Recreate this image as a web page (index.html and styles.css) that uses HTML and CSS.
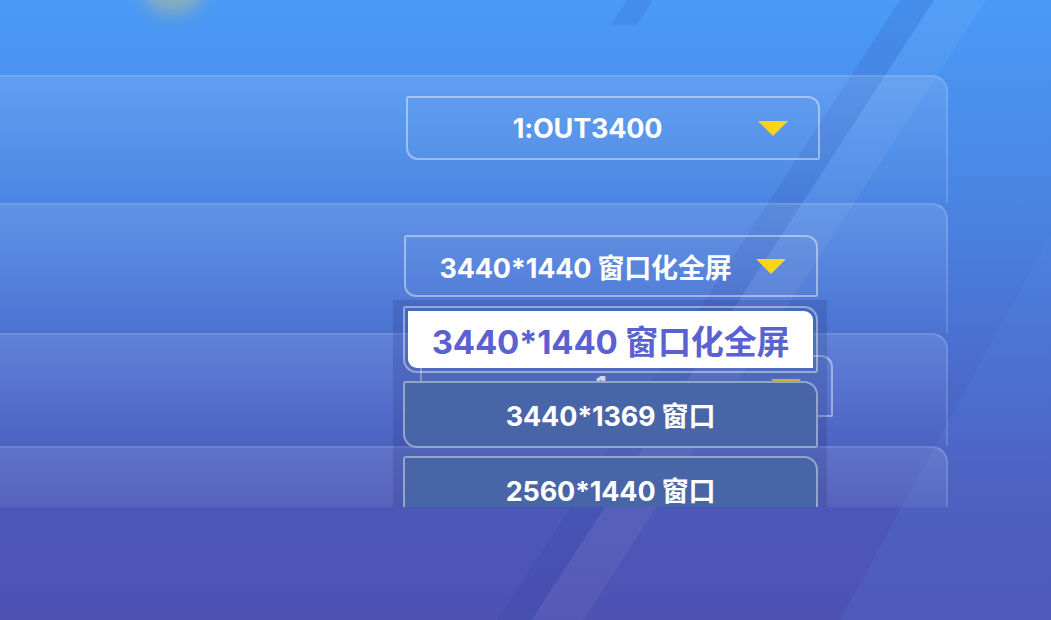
FILE: index.html
```html
<!DOCTYPE html>
<html lang="zh-CN">
<head>
    <meta charset="UTF-8">
    <meta name="viewport" content="width=device-width, initial-scale=1.0">
    <title>显示设置</title>
    <link rel="stylesheet" href="styles.css">
</head>
<body>
    <div class="screen">
        <div class="deco">
            <span class="glow"></span>
            <span class="band band-tip"></span>
            <span class="band band-dark"></span>
            <span class="band band-light"></span>
            <span class="band band-wide"></span>
        </div>

        <div class="list">
            <div class="row row-1">
                <div class="select">
                    <span class="value">1:OUT3400</span>
                    <i class="arrow"></i>
                </div>
            </div>
            <div class="row row-2">
                <div class="select">
                    <span class="value">3440*1440 窗口化全屏</span>
                    <i class="arrow"></i>
                </div>
            </div>
            <div class="row row-3">
                <div class="select">
                    <span class="value">1</span>
                    <i class="arrow"></i>
                </div>
            </div>
            <div class="row row-4"></div>

            <ul class="dropdown">
                <li class="option active">3440*1440 窗口化全屏</li>
                <li class="option">3440*1369 窗口</li>
                <li class="option">2560*1440 窗口</li>
            </ul>
        </div>
    </div>
</body>
</html>
```

FILE: styles.css
```css
body {
    margin: 0;
    font-family: Inter, "Noto Sans CJK SC", sans-serif;
    overflow: hidden;
}
.screen {
    position: relative;
    width: 1051px;
    height: 620px;
    overflow: hidden;
    background: linear-gradient(180deg, #4a9af7 0%, #4a87e5 30%, #4a70d1 55%, #4c58b8 82%, #4d52b3 100%);
}
.deco {
    position: absolute;
    inset: 0;
    pointer-events: none;
}
.glow {
    position: absolute;
    left: 142px;
    top: -34px;
    width: 62px;
    height: 48px;
    border-radius: 50%;
    background: rgba(200, 195, 130, 0.5);
    filter: blur(9px);
}
.band {
    position: absolute;
    top: 0;
    height: 620px;
    transform-origin: 0 0;
    transform: skewX(-33deg);
}
.band-tip {
    left: 640px;
    top: -20px;
    width: 26px;
    height: 45px;
    background: rgba(30, 60, 160, 0.12);
}
.band-dark {
    left: 900px;
    width: 34px;
    background: rgba(30, 55, 150, 0.12);
}
.band-light {
    left: 934px;
    width: 52px;
    background: rgba(255, 255, 255, 0.05);
}
.band-wide {
    left: 1178px;
    width: 500px;
    transform: skewX(-28.6deg);
    background: rgba(90, 150, 240, 0.13);
}

/* setting rows */
.list {
    position: relative;
    height: 507px;
    padding-top: 75px;
    box-sizing: border-box;
    overflow: hidden;
}
.row {
    width: 948px;
    box-sizing: border-box;
    border-top: 2px solid rgba(255,255,255,0.2);
    border-right: 2px solid rgba(255,255,255,0.14);
    border-radius: 0 16px 0 0;
    background: linear-gradient(rgba(255,255,255,0.12), rgba(255,255,255,0.01));
}
.row-1 {
    height: 128px;
    padding: 19px 0 0 406px;
}
.row-2 {
    height: 130px;
    padding: 30px 0 0 404px;
}
.row-3 {
    height: 113px;
    padding: 20px 0 0 420px;
}
.row-4 {
    height: 110px;
}
.select {
    width: 414px;
    height: 64px;
    box-sizing: border-box;
    display: flex;
    align-items: center;
    padding: 0 30px 0 18px;
    border: 2px solid rgba(255,255,255,0.42);
    border-radius: 3px 12px 2px 12px;
    background: rgba(255,255,255,0.02);
}
.row-2 .select,
.row-3 .select {
    height: 62px;
}
.row-3 .select {
    width: 413px;
}
.value {
    flex: 1;
    text-align: center;
    color: #fff;
    font-size: 27px;
    font-weight: 700;
    letter-spacing: -0.2px;
    white-space: nowrap;
}
.arrow {
    margin-left: 9px;
    width: 0;
    height: 0;
    border-left: 15px solid transparent;
    border-right: 15px solid transparent;
    border-top: 15px solid #fad51c;
}

/* open dropdown */
.dropdown {
    position: absolute;
    left: 393px;
    top: 300px;
    width: 434px;
    height: 230px;
    box-sizing: border-box;
    margin: 0;
    padding: 6px 9px 0 10px;
    list-style: none;
    background: rgba(30, 45, 120, 0.2);
}
.option {
    height: 67px;
    box-sizing: border-box;
    display: flex;
    align-items: center;
    justify-content: center;
    border: 2px solid rgba(255,255,255,0.42);
    border-radius: 3px 14px 3px 14px;
    background: #4865a8;
    color: #fff;
    font-size: 27px;
    font-weight: 700;
    letter-spacing: -0.2px;
    white-space: nowrap;
}
.option + .option {
    margin-top: 8px;
}
.option.active {
    margin-bottom: 2px;
    padding: 3px;
    background: #fff;
    background-clip: content-box;
    color: #5a62d2;
    font-size: 33px;
}
```
